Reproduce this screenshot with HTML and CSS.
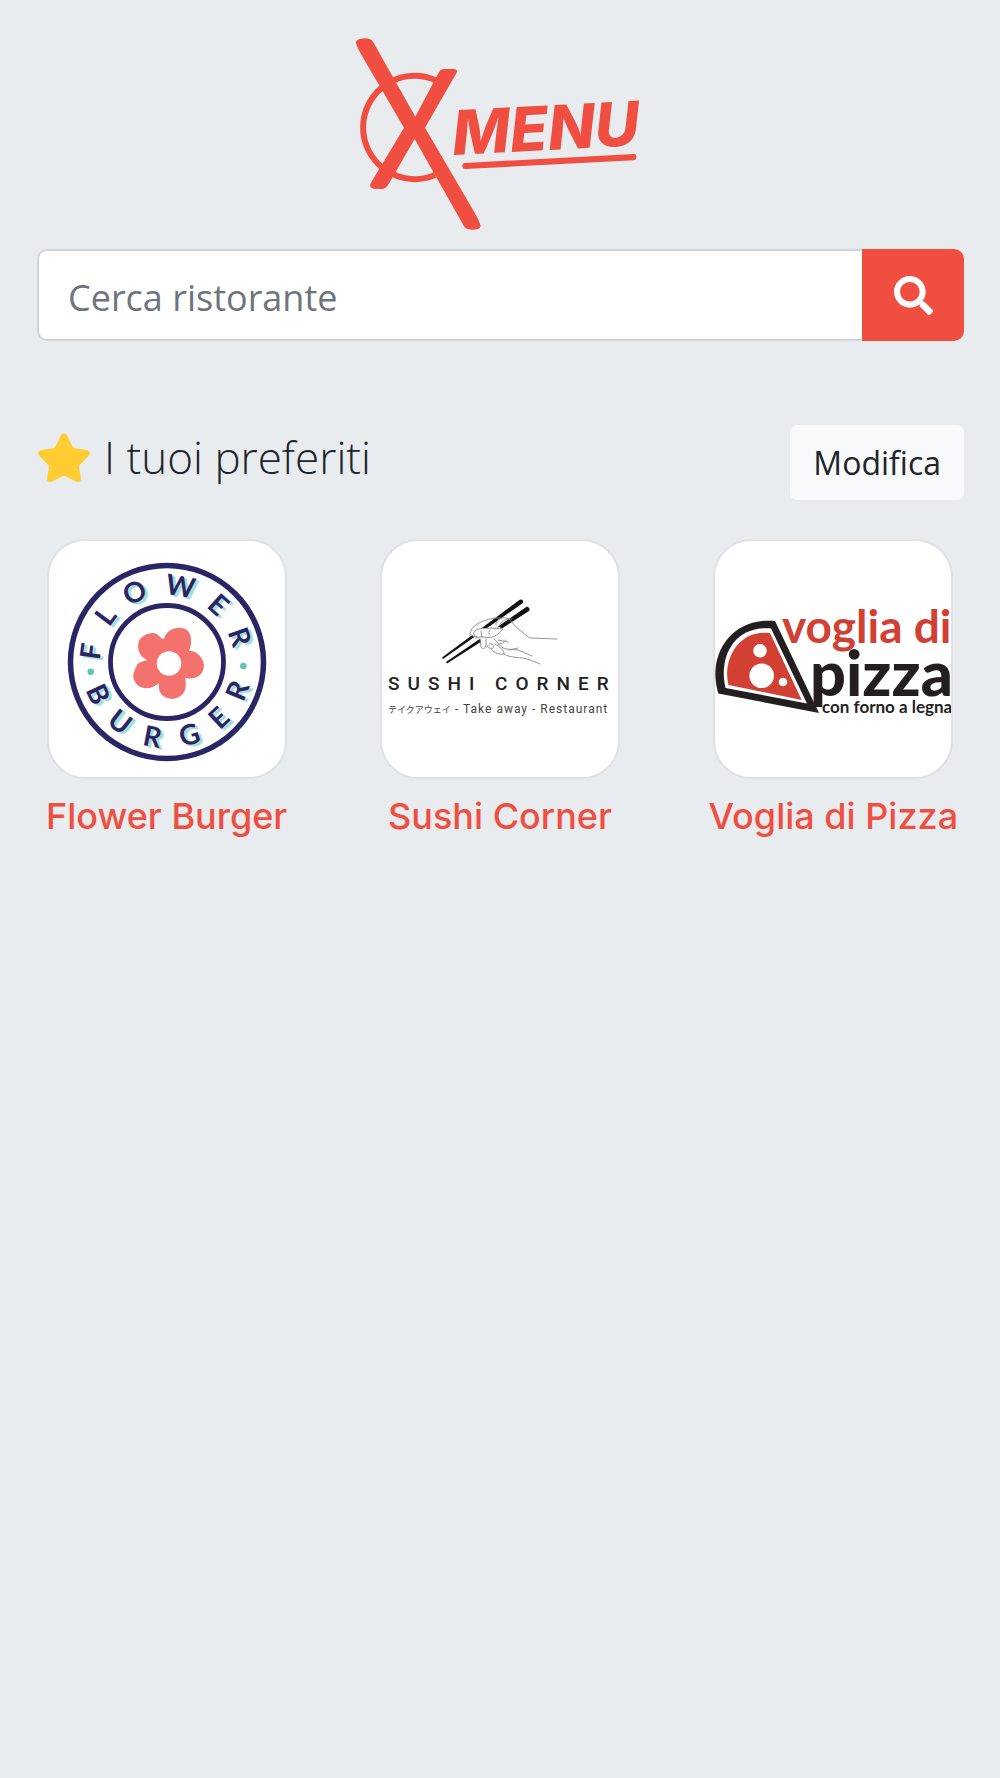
FILE: index.html
```html
<!DOCTYPE html>
<html lang="it">
<head>
  <meta charset="UTF-8" />
  <meta name="viewport" content="width=device-width, initial-scale=1" />
  <title>XMenu</title>
  <link rel="stylesheet" href="styles.css">
</head>
<body>
  <header>
    <svg class="logo" viewBox="0 0 960 660" role="img" aria-label="XMenu">
      <path class="logo-ring" d="M290 182 A155 155 0 1 0 285 465" />
      <path d="M48 70 Q45 56 75 55 Q94 55 100 67 L226 290 L295 160 Q301 147 312 147 L340 147 Q355 148 350 158 L255 323 L405 580 Q418 604 422 618 Q420 630 395 629 Q378 629 372 619 L224 357 L146 492 Q138 507 124 507 L100 506 Q86 503 92 490 L192 323 L64 104 Q52 84 48 70 Z" />
      <text class="logo-text" transform="translate(340 405) rotate(-3)">MENU</text>
      <path d="M374 429 L882 402 Q889 402 889 409 L889 414 Q889 420 882 421 L376 447 Q368 447 367 440 L367 436 Q367 430 374 429 Z" />
    </svg>
  </header>

  <main>
    <form class="search" onsubmit="return false">
      <input type="text" id="cerca" placeholder="Cerca ristorante" aria-label="Cerca ristorante" />
      <button type="submit" class="btn-search" aria-label="Cerca">
        <svg viewBox="0 0 512 512"><path d="M505 442.700L405.300 343c-4.500-4.500-10.600-7-17-7H372c27.600-35.300 44-79.700 44-128C416 93.100 322.900 0 208 0S0 93.100 0 208s93.100 208 208 208c48.300 0 92.700-16.400 128-44v16.300c0 6.400 2.500 12.500 7 17l99.700 99.700c9.400 9.400 24.600 9.400 33.900 0l28.300-28.300c9.400-9.400 9.400-24.600.1-34zM208 336c-70.700 0-128-57.200-128-128 0-70.700 57.200-128 128-128 70.700 0 128 57.200 128 128 0 70.700-57.200 128-128 128z" /></svg>
      </button>
    </form>

    <div class="title-row">
      <h1>
        <svg class="star" viewBox="0 0 52 49"><path d="M23.200 2.200 Q26 -1.500 28.800 2.200 L35.500 15 L48.500 17 Q53.500 18.500 51 22.500 L40.800 33 L43 45.500 Q43 50 38.500 48.700 L26 42.500 L13.500 48.700 Q9 50 9 45.500 L11.200 33 L1 22.500 Q-1.500 18.500 3.500 17 L16.500 15 Z" /></svg>
        I tuoi preferiti
      </h1>
      <button type="button" class="btn-edit">Modifica</button>
    </div>

    <div class="favorites">
      <a class="restaurant" href="#">
        <svg class="thumb" viewBox="0 0 236 236" aria-hidden="true">
          <defs>
            <g id="flowerText" class="flower-text">
              <text x="118" y="54" transform="rotate(-82 118 121)">F</text>
              <text x="118" y="54" transform="rotate(-53 118 121)">L</text>
              <text x="118" y="54" transform="rotate(-25 118 121)">O</text>
              <text x="118" y="54" transform="rotate(10 118 121)">W</text>
              <text x="118" y="54" transform="rotate(42 118 121)">E</text>
              <text x="118" y="54" transform="rotate(71 118 121)">R</text>
              <text x="118" y="207" transform="rotate(65 118 121)">B</text>
              <text x="118" y="207" transform="rotate(38 118 121)">U</text>
              <text x="118" y="207" transform="rotate(11 118 121)">R</text>
              <text x="118" y="207" transform="rotate(-17 118 121)">G</text>
              <text x="118" y="207" transform="rotate(-43 118 121)">E</text>
              <text x="118" y="207" transform="rotate(-68 118 121)">R</text>
            </g>
          </defs>
          <g fill="none" stroke="#2a2565">
            <circle cx="118" cy="121" r="96.500" stroke-width="5.500" />
            <circle cx="118" cy="121" r="56.500" stroke-width="4.800" />
          </g>
          <use href="#flowerText" x="3" y="2" fill="#a9dfd6" />
          <use href="#flowerText" fill="#2a2565" />
          <g fill="#5fc5b6">
            <circle cx="41.700" cy="130.700" r="3.300" />
            <circle cx="194.300" cy="125" r="3.300" />
          </g>
          <path fill="#f4726e" d="M115 98 C118 86 133 84 139 90 C143 95 143 104 140 110 C147 109 154 116 155 124 C155 134 147 139 136 137 C139 149 134 157 123 158 C112 157 109 150 110 142 C101 150 90 148 86 141 C82 134 86 129 88 124 C91 120 94 121 98 119 C89 115 87 104 91 98 C97 91 107 90 110 95 C112 97 113 98 115 98 Z" />
          <circle cx="120" cy="122.500" r="12.200" fill="#fff" />
        </svg>
        <span>Flower Burger</span>
      </a>

      <a class="restaurant" href="#">
        <svg class="thumb" viewBox="0 0 236 236" aria-hidden="true">
          <path fill="#111" d="M60 116.500 L138 58.500 Q142 58 141 62 L61 118 Z M64 121 L145 65.500 Q149 67 147 70 L65 122.500 Z" />
          <!-- hand -->
          <g fill="#fff" stroke="#888" stroke-width=".9" stroke-linecap="round" stroke-linejoin="round">
            <path stroke="none" d="M91 88 L118 86 L120 89 L108 98 L101 108 L98 98 L88 94 Z" />
            <path fill="none" d="M88 94 C88 84 101 79 113 77 L120 77 M114 84 C113 78 121 75 127 78 C133 86 141 92 148 97 L175 98 M130 78 C124 77 120 80 117 85" />
            <path d="M93 90 C97 86 104 88 110 87 L121 88 C116 94 110 98 102 96 L95 96 C91 95 91 91 93 90 Z" />
            <path fill="none" d="M99 90 L100 96 M108 89 C106 91 107 94 108 94 M89 94 L96 97 M98 98 L99 106 C101 109 104 107 104 104 L104 98 M105 105 C108 109 113 108 111 104 C109 101 106 104 105 106 M112 98 C117 102 117 106 124 108 L136 109 L150 115 M113 103 C118 106 122 109 122 113 C116 114 111 111 109 108 M116 99 L126 101 M116 103 C122 103 122 100 124 99 M122 113 C129 118 139 115 148 119 L158 123 M127 109 L136 107" />
          </g>
          <text class="sushi-name" x="6" y="149">SUSHI CORNER</text>
          <text class="sushi-kana" x="6" y="172">テイクアウェイ</text>
          <text class="sushi-sub" x="73" y="172">- Take away - Restaurant</text>
        </svg>
        <span>Sushi Corner</span>
      </a>

      <a class="restaurant" href="#">
        <svg class="thumb" viewBox="0 0 236 236" aria-hidden="true">
          <path fill="#231f20" d="M60 80 L104 172 L3.300 152.500 C-9 112 18 76 60 80 Z" />
          <path fill="#fff" d="M56 87.500 L92 162.500 L10.500 147 C3 115 20 84 56 87.500 Z" />
          <path fill="#d24034" d="M55 92 L86.700 159 L13.500 144 C7 118 24 88 55 92 Z" />
          <g fill="#fff">
            <circle cx="45" cy="109.700" r="6.800" />
            <circle cx="46.700" cy="134.700" r="12.300" />
            <circle cx="68" cy="141" r="4.300" />
          </g>
          <text class="pizza-top" x="67" y="102">voglia di</text>
          <text class="pizza-name" x="95" y="155">pizza</text>
          <text class="pizza-sub" x="107" y="172">con forno a legna</text>
        </svg>
        <span>Voglia di Pizza</span>
      </a>
    </div>
  </main>
</body>
</html>
```
FILE: styles.css
```css
* {
  box-sizing: border-box;
}

body {
  margin: 0;
  background-color: #e8ecef;
  color: #212529;
  font-family: "Open Sans", "Noto Sans", sans-serif;
}

header {
  padding-top: 20px;
  text-align: center;
}

.logo {
  display: block;
  width: 320px;
  margin: 0 auto;
  fill: #f04e41;
}

.logo-ring {
  fill: none;
  stroke: #f04e41;
  stroke-width: 18px;
}

.logo-text {
  font: italic 800 184px Inter, sans-serif;
}

.search {
  display: flex;
  height: 92px;
  margin: 9px 36px 0 37px;
}

.search input {
  flex: 1;
  min-width: 0;
  padding: 4px 29px 0;
  border: 2px solid #ced4da;
  border-right: 0;
  border-radius: 10px 0 0 10px;
  background-color: #fff;
  color: #495057;
  font: 36px "Open Sans", sans-serif;
}

.search input::placeholder {
  color: #6c757d;
  opacity: 1;
}

.btn-search {
  width: 102px;
  padding: 0;
  border: none;
  border-radius: 0 10px 10px 0;
  background-color: #f04e41;
  cursor: pointer;
}

.btn-search svg {
  display: block;
  width: 39px;
  margin: 0 auto;
  fill: #fff;
}

.title-row {
  display: flex;
  justify-content: space-between;
  align-items: flex-start;
  margin: 84px 36px 0 38px;
}

h1 {
  display: flex;
  align-items: center;
  gap: 14px;
  margin: 0;
  font-size: 44px;
  font-weight: 300;
  line-height: 64px;
}

.star {
  width: 52px;
  fill: #ffcd32;
}

.btn-edit {
  height: 75px;
  padding: 0 23px;
  border: none;
  border-radius: 7px;
  background-color: #f8f9fa;
  color: #212529;
  font: 32px "Open Sans", sans-serif;
  cursor: pointer;
}

.favorites {
  display: grid;
  grid-template-columns: repeat(3, 1fr);
  margin-top: 39px;
}

.restaurant {
  display: flex;
  flex-direction: column;
  align-items: center;
  gap: 13px;
  color: #f04e41;
  font: 500 36px Inter, sans-serif;
  line-height: 48px;
  white-space: nowrap;
  text-decoration: none;
}

.thumb {
  width: 240px;
  height: 240px;
  border: 2px solid #dee2e6;
  border-radius: 38px;
  background-color: #fff;
  overflow: hidden;
}

.flower-text {
  font: 700 28px Lato, sans-serif;
  text-anchor: middle;
}

.sushi-name {
  fill: #222;
  font: 500 19px Roboto, sans-serif;
  letter-spacing: 8px;
}

.sushi-kana {
  fill: #444;
  font: 9px "Noto Sans CJK JP", sans-serif;
}

.sushi-sub {
  fill: #444;
  font: 12px Roboto, sans-serif;
  letter-spacing: 1px;
}

.pizza-top {
  fill: #d24034;
  font: 700 46px Lato, sans-serif;
}

.pizza-name {
  fill: #231f20;
  font: 900 63px Lato, sans-serif;
}

.pizza-sub {
  fill: #231f20;
  font: 700 17px Lato, sans-serif;
}
```
